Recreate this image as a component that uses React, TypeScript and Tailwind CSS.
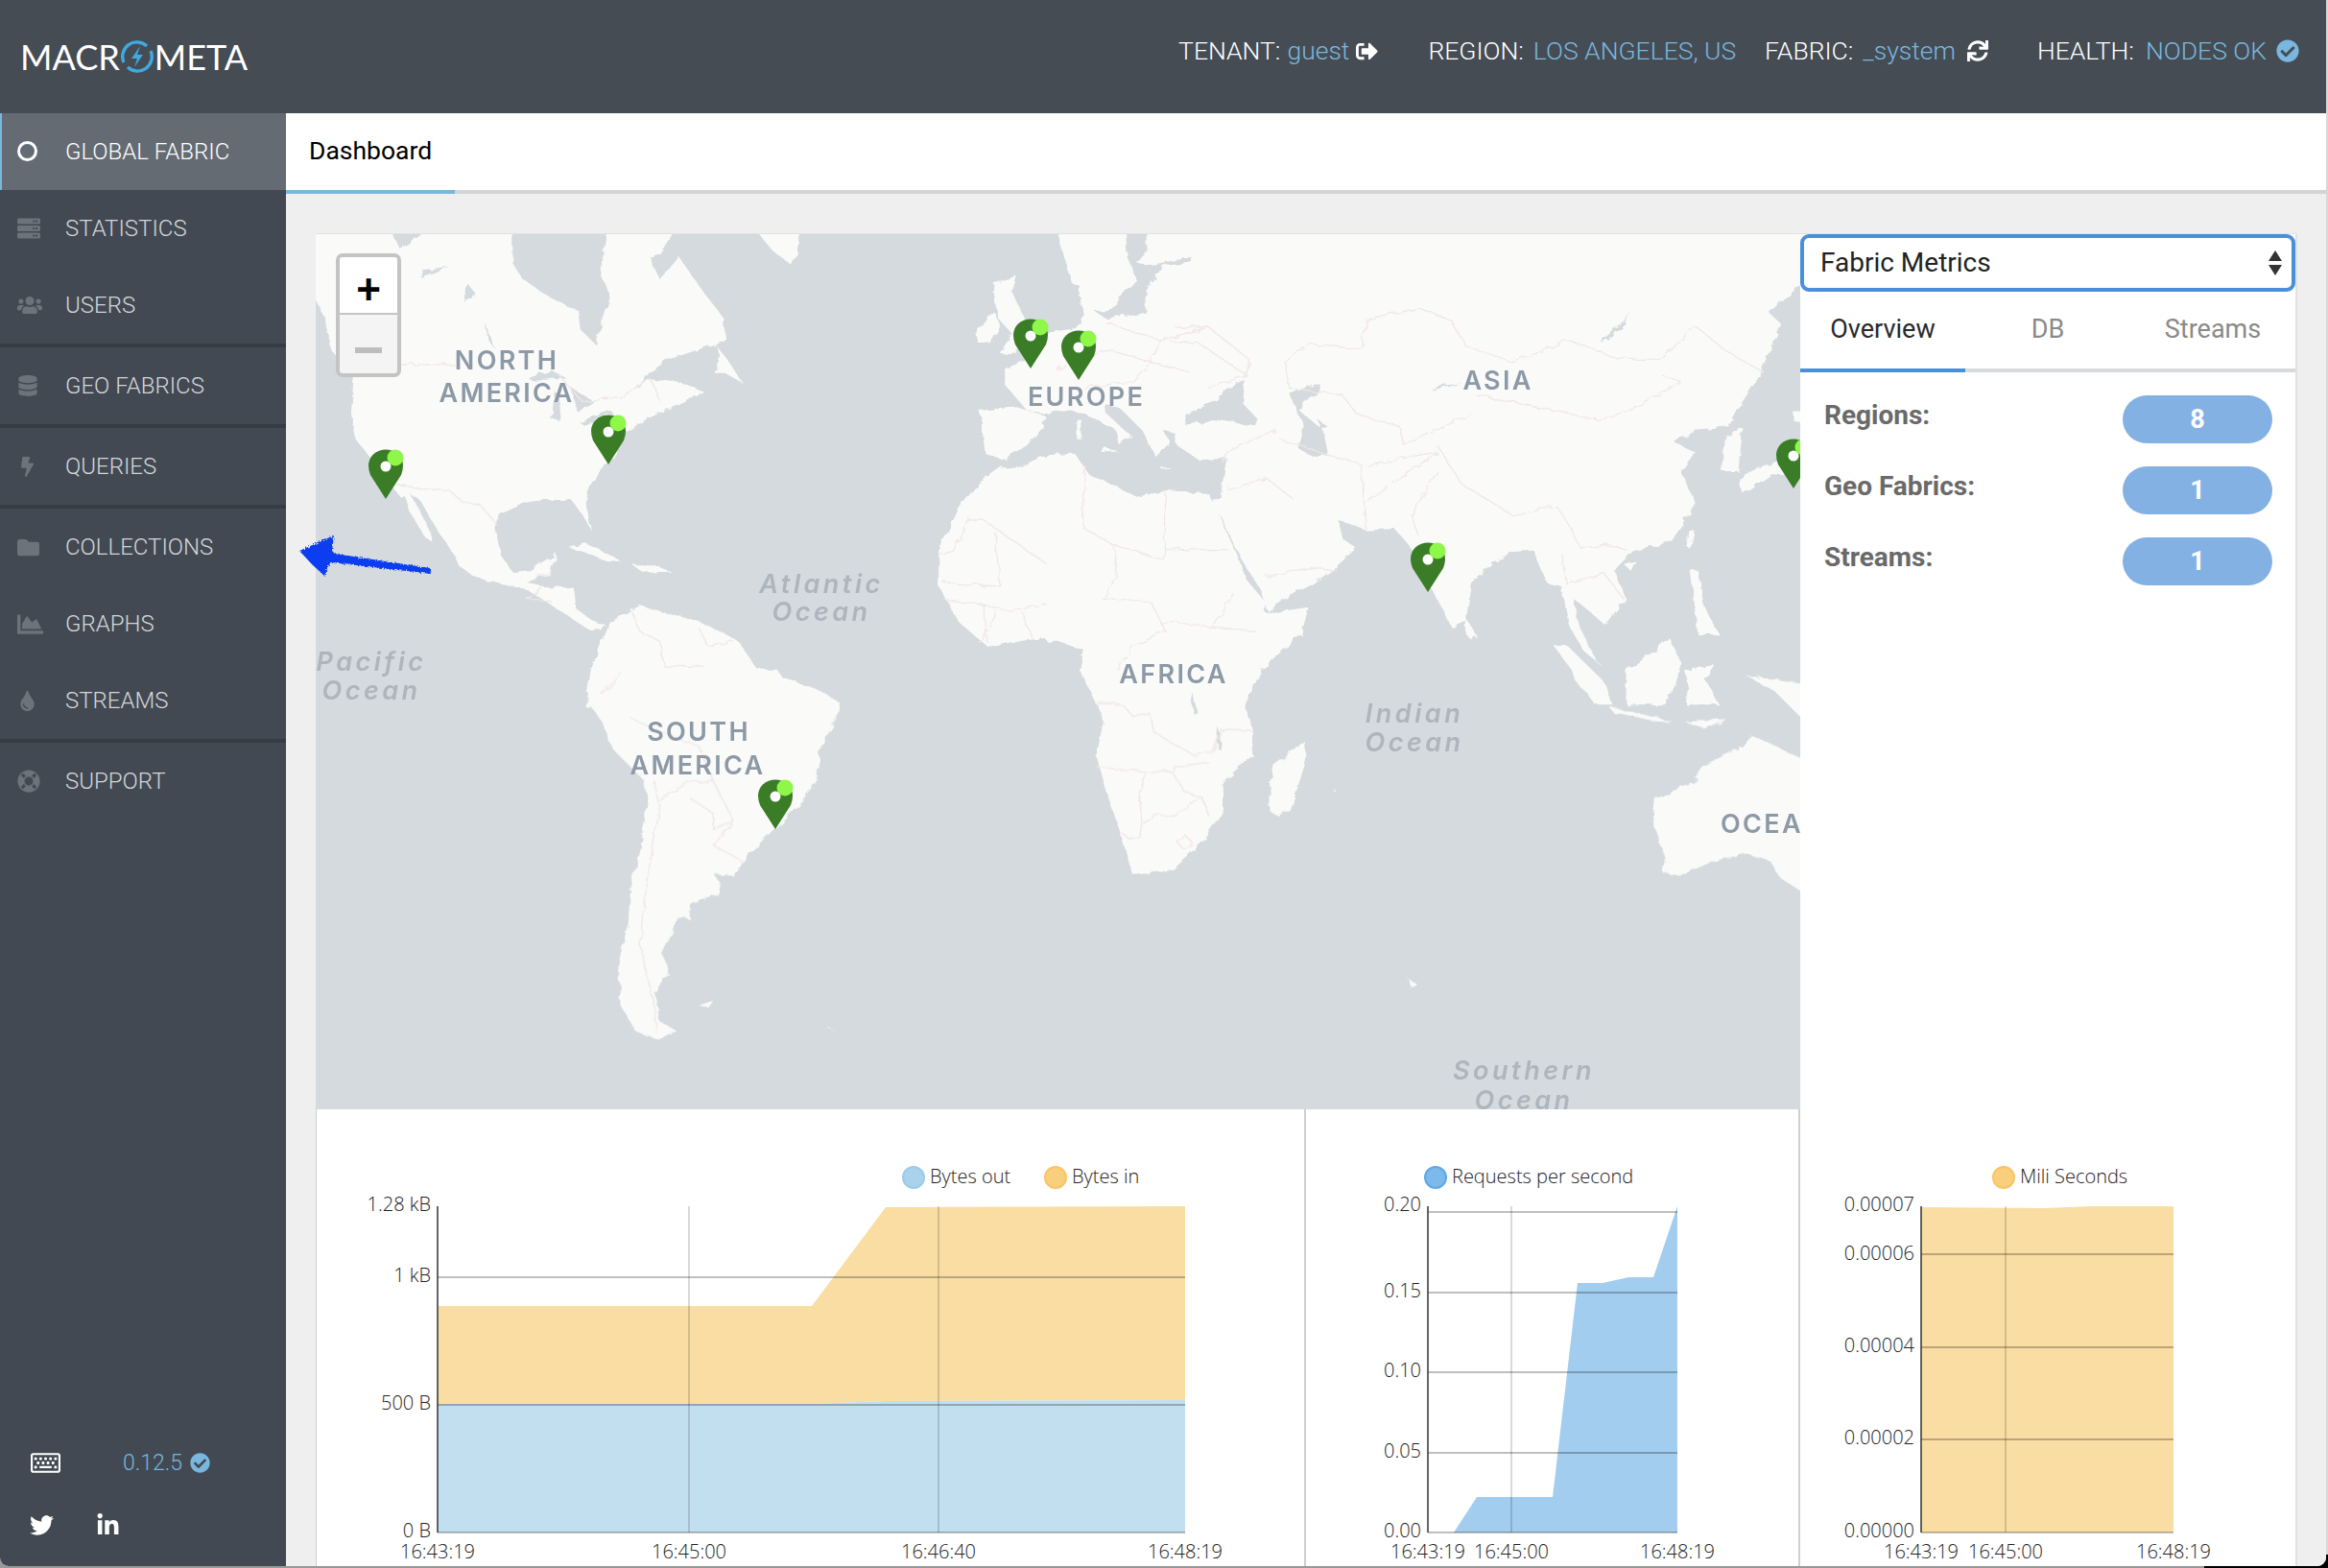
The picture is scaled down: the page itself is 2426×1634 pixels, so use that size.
import React from "react";
import {
  FaServer, FaUsers, FaDatabase, FaBolt, FaFolder, FaChartArea, FaTint, FaLifeRing,
  FaSignOutAlt, FaSync, FaCheckCircle, FaRegKeyboard, FaTwitter, FaLinkedinIn,
} from "react-icons/fa";

const NAV: { label: string; Icon?: React.ComponentType<{ className?: string }>; sep?: boolean; active?: boolean; cls?: string }[] = [
  { label: "GLOBAL FABRIC", active: true },
  { label: "STATISTICS", Icon: FaServer, cls: "text-[24px]" },
  { label: "USERS", Icon: FaUsers, cls: "text-[26px]", sep: true },
  { label: "GEO FABRICS", Icon: FaDatabase, cls: "text-[22px]", sep: true },
  { label: "QUERIES", Icon: FaBolt, cls: "text-[21px]", sep: true },
  { label: "COLLECTIONS", Icon: FaFolder, cls: "text-[23px]" },
  { label: "GRAPHS", Icon: FaChartArea, cls: "text-[27px]" },
  { label: "STREAMS", Icon: FaTint, cls: "text-[21px]", sep: true },
  { label: "SUPPORT", Icon: FaLifeRing, cls: "text-[24px]" },
];

function Logo() {
  return (
    <div className="ml-[21px] flex items-center text-[36px] text-white [font-family:Lato,sans-serif] font-normal leading-none">
      <span>MACR</span>
      <svg viewBox="0 0 34 34" className="mx-[1px] h-[34px] w-[34px]">
        <path d="M27 6 A15 15 0 0 0 3 23" fill="none" stroke="#3fa9e0" strokeWidth="3.4" />
        <path d="M7 28 A15 15 0 0 0 31 11" fill="none" stroke="#3fa9e0" strokeWidth="3.4" />
        <path d="M20 6 L11 19 H17 L14 28 L23 15 H17 Z" fill="#3fa9e0" />
      </svg>
      <span>META</span>
    </div>
  );
}

function Header() {
  const label = "text-white";
  const val = "text-[#79b7de]";
  return (
    <header className="flex h-[118px] shrink-0 items-center justify-between bg-[#454c54] text-[26.5px] font-light">
      <Logo />
      <div className="mb-[12px] mr-[28px] flex items-center">
        <span className={label}>TENANT:</span>
        <span className={`${val} ml-[7px]`}>guest</span>
        <FaSignOutAlt className="ml-[7px] text-[23px] text-white" />
        <span className={`${label} ml-[52px]`}>REGION:</span>
        <span className={`${val} ml-[10px]`}>LOS ANGELES, US</span>
        <span className={`${label} ml-[30px]`}>FABRIC:</span>
        <span className={`${val} ml-[10px]`}>_system</span>
        <FaSync className="ml-[12px] text-[22px] text-white" />
        <span className={`${label} ml-[51px]`}>HEALTH:</span>
        <span className={`${val} ml-[12px]`}>NODES OK</span>
        <FaCheckCircle className="ml-[10px] text-[24px] text-[#79b7de]" />
      </div>
    </header>
  );
}

function Sidebar() {
  return (
    <aside className="flex w-[298px] shrink-0 flex-col bg-[#424952]">
      {NAV.map((n) => (
        <div key={n.label} className={n.sep ? "border-b-4 border-[#363c43]" : ""}>
          <div
            className={
              n.active
                ? "flex h-[80px] items-center border-l-2 border-[#79b7de] bg-[#646b73] pb-[1px] text-[24px] font-light text-white"
                : "flex h-[80px] items-center border-l-2 border-transparent text-[24px] font-light text-[#d3d6d9]"
            }
          >
            <span className={`flex w-[66px] items-center pl-[16px] text-[#6c737b] ${n.cls ?? ""}`}>
              {n.Icon ? <n.Icon /> : <span className="block h-[21px] w-[21px] rounded-full border-[3.5px] border-white" />}
            </span>
            <span>{n.label}</span>
          </div>
        </div>
      ))}
      <div className="mt-auto flex flex-col pb-[30px]">
        <div className="flex items-center pl-[32px]">
          <FaRegKeyboard className="text-[31px] text-white" />
          <span className="ml-[65px] text-[23px] font-light text-[#79b7de]">0.12.5</span>
          <FaCheckCircle className="ml-[8px] text-[21px] text-[#79b7de]" />
        </div>
        <div className="mt-[35px] flex items-center pl-[31px] text-[25px] text-white">
          <FaTwitter />
          <FaLinkedinIn className="ml-[44px]" />
        </div>
      </div>
    </aside>
  );
}

const sea = "#d4dadd";
const land = "#fafaf9";
const border = "#f1e7e7";

function Poly({ p, fill }: { p: string; fill?: string }) {
  return <polygon points={p} fill={fill ?? land} />;
}
function Line({ p }: { p: string }) {
  return <polyline points={p} fill="none" stroke={border} strokeWidth="1.3" vectorEffect="non-scaling-stroke" />;
}

const PINS = [
  [402, 519], [634, 483], [1074, 383], [1124, 395], [1488, 616], [1869, 508], [808, 863],
];

const LABELS: [string, number, number, number][] = [
  ["NORTH", 528, 374, 0], ["AMERICA", 528, 408, 0], ["EUROPE", 1132, 412, 0], ["ASIA", 1561, 395, 0],
  ["AFRICA", 1223, 701, 0], ["SOUTH", 728, 761, 0], ["AMERICA", 727, 796, 0], ["OCEANIA", 1793, 857, 1],
];
const SEAS: [string, number, number][] = [
  ["Atlantic", 856, 607], ["Ocean", 856, 636], ["Pacific", 387, 688], ["Ocean", 387, 718],
  ["Indian", 1474, 742], ["Ocean", 1474, 772], ["Southern", 1588, 1114], ["Ocean", 1588, 1145],
];

function MapPanel() {
  return (
    <div className="relative flex-1 overflow-hidden">
      <svg viewBox="329 243 1547 912" className="block h-full w-full">
        <defs>
          <filter id="rough" x="300" y="200" width="1620" height="990" filterUnits="userSpaceOnUse">
            <feTurbulence type="fractalNoise" baseFrequency="0.09" numOctaves="3" seed="4" result="n" />
            <feDisplacementMap in="SourceGraphic" in2="n" scale="7" />
          </filter>
        </defs>
        <rect x="329" y="243" width="1547" height="912" fill={sea} />
        <g filter="url(#rough)">
          <g transform="translate(320 230) scale(0.5102 0.33333)">
            <Poly p="0,-30 175,-30 175,42 190,85 232,42 232,-30 420,-30 420,130 440,180 500,240 555,280 560,340 590,385 600,330 620,230 600,170 610,42 610,-30 745,-30 745,42 720,100 700,110 720,180 760,110 800,200 850,300 855,370 800,400 740,430 700,470 670,530 700,490 760,500 810,530 745,580 690,620 650,660 625,740 600,780 575,830 570,880 580,965 565,920 540,870 480,870 440,880 395,910 385,960 395,1040 420,1095 455,1090 510,1035 495,1100 450,1130 480,1140 545,1145 550,1210 585,1250 610,1260 580,1280 520,1220 450,1150 400,1135 340,1110 310,1075 300,1040 260,950 230,870 205,850 190,860 125,730 100,680 90,600 95,490 70,450 50,400 35,300 20,250 0,220" />
            <Poly p="195,845 210,850 250,960 258,1005 240,985 215,920" />
            <Poly p="450,490 500,465 530,490 470,500" fill={sea} />
            <Poly p="505,530 515,540 518,620 500,620" fill={sea} />
            <Poly p="540,520 585,560 555,600 545,560" fill={sea} />
            <Poly p="555,625 620,590 625,600 565,635" fill={sea} />
            <Poly p="240,150 290,140 230,175" fill={sea} />
            <Poly p="325,190 345,225 320,250" fill={sea} />
            <Poly p="360,310 385,400 370,370" fill={sea} />
            <Poly p="925,-30 1005,-30 1005,42 1000,110 985,130 950,90 925,42" />
            <Poly p="835,385 858,430 890,505 850,470 830,470 845,420" />
            <Poly p="535,1020 570,1005 640,1060 620,1065 580,1040 550,1025" />
            <Poly p="665,1075 710,1075 745,1095 720,1095 690,1100" />
            <Poly p="1365,350 1400,275 1415,320 1395,375 1370,380" />
            <Poly p="1400,190 1450,170 1440,220 1470,320 1490,370 1430,420 1415,410 1440,350 1410,300" />
            <Poly p="1375,590 1450,580 1510,610 1505,640 1470,700 1420,745 1385,725 1380,660" />
            <Poly p="1420,765 1450,770 1500,735 1568,730 1600,800 1600,1330 1520,1300 1460,1310 1395,1335 1330,1250 1290,1140 1290,1030 1330,900 1370,820" />
            <Poly p="620,1250 680,1200 720,1220 800,1250 880,1310 920,1400 1000,1440 1085,1500 1085,1520 570,1520 580,1400 600,1320" />
            <Line p="190,447 300,447" />
            <Line p="510,470 560,560 640,550 700,490 720,560" />
            <Line p="185,825 290,840 320,880 350,880 390,950" />
            <Line p="450,1130 500,1090" />
            <Line p="480,1140 450,1180 500,1190" />
            <Line p="660,1210 680,1280 720,1310 730,1390 810,1390" />
            <Line p="800,1270 820,1330 870,1310" />
            <Line p="1380,930 1350,930 1320,1030 1290,1040" />
            <Line p="1380,930 1500,1060 1525,1080 1568,1060" />
            <Line p="1405,970 1415,1140 1300,1130" />
            <Line p="1525,1080 1525,1230" />
            <Line p="1300,1180 1390,1200 1440,1220 1568,1170" />
            <Line p="1380,1200 1390,1320" />
            <Line p="1460,1220 1480,1300" />
            <Line p="1375,1320 1410,1220" />
          </g>
          <g transform="translate(1100 230) scale(0.4975 0.33333)">
            <Poly p="6,-30 1600,-30 1600,150 1560,190 1495,285 1520,320 1480,470 1440,560 1410,640 1340,650 1295,690 1340,720 1310,780 1340,880 1290,1000 1210,1030 1170,1090 1195,1180 1150,1260 1120,1220 1085,1180 1095,1260 1135,1380 1150,1395 1105,1340 1075,1260 1060,1140 1030,1130 1000,1025 950,1030 870,1130 860,1250 830,1270 810,1210 780,1130 745,1020 710,960 650,965 590,930 600,990 630,1020 580,1090 530,1140 460,1195 445,1220 430,1150 390,1060 345,920 320,880 345,860 358,740 300,745 255,700 250,660 225,650 240,690 210,735 180,650 140,590 105,570 100,590 150,660 160,670 135,700 125,650 60,600 0,590 -30,600 -60,590 -106,510 -106,460 -40,420 -40,380 0,340 40,330 60,290 50,245 50,200 32,190 6,42" />
            <Poly p="1400,680 1440,640 1430,780 1395,780" />
            <Poly p="145,-30 190,-30 190,95 170,130 200,135 285,110 280,125 225,135 190,215 190,280 110,305 80,280 110,280 120,260 170,180 150,110" fill={sea} />
            <Poly p="270,600 300,580 340,560 355,520 395,495 390,565 425,620 420,640 340,620 270,635" fill={sea} />
            <Poly p="490,540 550,500 555,520 510,590 560,650 570,720 540,735 510,710 520,640" fill={sea} />
            <Poly p="550,620 570,640 555,650" fill={sea} />
            <Poly p="1140,375 1195,310 1205,260 1195,320 1160,370" fill={sea} />
            <Poly p="790,530 850,505 800,515" fill={sea} />
            <Poly p="-20,730 40,725 70,790 130,830 170,860 235,840 320,850 330,880 380,1040 400,1120 440,1190 440,1225 530,1205 515,1290 430,1400 395,1510 85,1510 50,1400 60,1340 0,1310 -20,1310" />
            <Poly p="1430,800 1465,775 1540,740 1600,690 1600,800 1500,790 1440,850" />
            <Poly p="1545,590 1600,590 1600,640 1550,630" />
            <Poly p="1330,1090 1345,1090 1355,1190 1390,1290 1345,1290 1340,1220" />
            <Poly p="1325,965 1338,965 1330,1025 1322,1015" />
            <Poly p="1190,1070 1215,1060 1205,1092" />
            <Poly p="860,1240 885,1300 870,1306 860,1290" />
            <Poly p="1040,1320 1075,1330 1150,1440 1165,1510 1130,1510 1090,1420" />
            <Poly p="1195,1400 1240,1360 1285,1300 1310,1380 1300,1440 1280,1510 1195,1510" />
            <Poly p="1320,1510 1330,1400 1380,1385 1360,1430 1390,1510" />
            <Poly p="1470,1420 1600,1470 1600,1510 1500,1460" />
            <Poly p="45,620 55,620 55,680 45,680" />
            <Poly p="100,705 130,715 95,720" />
            <Poly p="220,765 245,770 220,772" />
            <Line p="250,330 320,330 405,430 400,480 320,520" />
            <Line p="480,440 530,380 640,400 650,310 760,270 830,310 860,390 960,440 1075,370 1180,430 1270,430 1340,325 1400,400 1480,470" />
            <Line p="880,540 1040,590 1140,620 1220,580 1310,500 1270,480" />
            <Line p="480,440 490,520 600,540 630,600 720,640 730,700 870,600" />
            <Line p="800,700 850,820 960,920 1050,890 1080,960 1100,1020 1170,1010 1200,1030" />
            <Line p="800,780 745,920 760,980" />
            <Line p="470,680 640,760 650,960" />
            <Line p="650,760 800,720 650,880" />
            <Line p="360,840 440,800 500,870" />
            <Line p="60,760 60,960 120,1010 230,1060 230,840" />
            <Line p="230,1025 360,1025" />
            <Line p="120,1010 130,1100 100,1180 200,1190" />
            <Line p="200,1190 230,1280 160,1330 130,1400" />
            <Line p="370,1160 330,1270 240,1250 220,1260" />
            <Line p="330,1270 420,1280" />
            <Line p="440,1110 540,1080 590,1090" />
            <Line p="1060,1040 1070,1130 1150,1100 1190,1180" />
            <Line p="110,320 220,370 200,440 280,470" />
            <Line p="0,460 110,400 200,440 160,500 60,520" />
            <Line p="220,370 320,330" />
            <Line p="400,480 300,380 220,370" />
            <Line p="460,650 360,720 350,760" />
          </g>
          <g transform="translate(320 700) scale(0.5102 0.33333)">
            <Poly p="580,-10 570,80 600,150 625,240 690,340 695,400 680,560 660,680 655,800 635,930 640,1040 670,1120 720,1150 755,1120 720,1090 710,1000 740,930 725,880 750,800 755,760 780,770 785,720 840,690 845,660 830,630 870,635 900,570 940,510 1000,420 1040,340 1050,220 1090,120 1085,90 1040,50 980,40 960,-10" />
            <Poly p="800,1040 830,1025 820,1047" />
            <Poly p="1058,1100 1078,1120 1065,1110" />
            <Line p="640,0 600,70" />
            <Line p="660,140 700,170 800,230 830,340 870,460 830,540 890,590" />
            <Line p="710,340 720,430 690,680 680,850 710,1050 712,1120" />
            <Line p="720,400 780,340 830,340" />
            <Line p="780,390 830,440 830,490 870,460" />
          </g>
          <g transform="translate(1100 700) scale(0.5 0.33333)">
            <Poly p="50,-10 80,70 100,150 85,260 110,390 135,500 160,630 240,615 300,540 350,430 350,370 345,345 410,260 410,180 395,100 430,-10" />
            <Poly p="515,210 525,260 490,430 465,450 445,430 445,380 455,290 490,250" />
            <Poly p="1600,300 1500,230 1450,195 1420,240 1350,290 1330,345 1250,390 1245,460 1270,580 1265,625 1300,635 1370,590 1440,565 1490,590 1510,640 1600,730" />
            <Poly p="1155,105 1250,140 1285,150 1250,152 1160,122" />
            <Poly p="1310,150 1400,145 1350,175" />
            <Poly p="1075,-10 1150,100 1130,90 1090,40" />
            <Poly p="1195,-10 1295,-10 1270,60 1210,50" />
            <Poly p="1310,-10 1360,-10 1340,40 1350,80 1320,60" />
            <Poly p="1440,10 1560,35 1560,150 1500,60" />
            <Poly p="735,955 755,975 738,980" />
            <Poly p="580,365 586,372 580,372" />
            <Poly p="283,60 298,130 290,135 280,80" fill={sea} />
            <Poly p="337,165 348,245 340,240 335,190" fill={sea} />
            <Line p="85,95 140,100 160,135 195,125 205,185 290,260 330,240 345,180 410,180" />
            <Line p="85,295 190,310 240,305 270,290 320,280" />
            <Line p="190,310 175,385 180,475 210,445 245,450 305,390 320,450" />
            <Line p="240,305 270,375 305,390" />
            <Line p="135,500 150,515 175,515 180,470" />
            <Line p="255,530 270,510 285,530 265,550 255,530" />
          </g>
        </g>
        {PINS.map(([x, y]) => (
          <g key={x}>
            <path
              d={`M${x} ${y} L${x - 16} ${y - 25} Q${x - 18} ${y - 30} ${x - 18} ${y - 35} A18 16.5 0 0 1 ${x + 18} ${y - 35} Q${x + 18} ${y - 30} ${x + 16} ${y - 25}Z`}
              fill="#3a7d26"
            />
            <circle cx={x} cy={y - 34} r="5.5" fill="#fff" />
            <circle cx={x + 10} cy={y - 43} r="8.5" fill="#8ef74a" />
          </g>
        ))}
        {LABELS.map(([t, x, y, start]) => (
          <text
            key={t + x}
            x={x}
            y={y}
            textAnchor={start ? "start" : "middle"}
            dominantBaseline="central"
            className="fill-[#8c99a6] text-[27px] font-semibold tracking-[2.3px] [font-family:Inter,sans-serif]"
          >
            {t}
          </text>
        ))}
        {SEAS.map(([t, x, y]) => (
          <text
            key={t + y}
            x={x}
            y={y}
            textAnchor="middle"
            dominantBaseline="central"
            className="fill-[#adb5bd] text-[27px] font-semibold italic tracking-[3.5px] [font-family:Inter,sans-serif]"
          >
            {t}
          </text>
        ))}
      </svg>
      <div className="absolute left-[21px] top-[20px] flex h-[129px] w-[68px] flex-col overflow-hidden rounded-[7px] border-4 border-[#c4c4c4] bg-[#f4f4f4]">
        <div className="flex h-[60px] items-center justify-center border-b-2 border-[#c4c4c4] bg-white">
          <span className="mt-[10px] block text-[44px] font-bold leading-none text-black [font-family:'Liberation_Sans',sans-serif]">+</span>
        </div>
        <div className="flex flex-1 items-center justify-center">
          <span className="mt-[12px] block h-[6px] w-[28px] bg-[#bdbdbd]" />
        </div>
      </div>
    </div>
  );
}

function MetricsPanel() {
  const rows: [string, string][] = [["Regions:", "8"], ["Geo Fabrics:", "1"], ["Streams:", "1"]];
  return (
    <div className="flex w-[516px] shrink-0 flex-col bg-white">
      <div className="flex h-[60px] items-center justify-between rounded-[9px] border-4 border-[#4a90d9] pl-[17px] pr-[10px] text-[28px] text-[#222]">
        <span>Fabric Metrics</span>
        <svg viewBox="0 0 14 26" className="h-[26px] w-[14px]">
          <path d="M7 0 L14 11 H0Z M0 15 H14 L7 26Z" fill="#333" />
        </svg>
      </div>
      <div className="flex h-[84px] border-b-4 border-[#d8dadc] pb-[2px] text-[27px]">
        <div className="relative flex w-[172px] items-center justify-center text-[#2a2a2a]">
          Overview
          <span className="absolute -bottom-[6px] left-0 h-[4px] w-full bg-[#4a90d9]" />
        </div>
        <div className="flex w-[172px] items-center justify-center text-[#8a8a8a]">DB</div>
        <div className="flex w-[172px] items-center justify-center text-[#8a8a8a]">Streams</div>
      </div>
      <div className="flex flex-col gap-[24px] pl-[25px] pr-[24px] pt-[24px]">
        {rows.map(([k, v]) => (
          <div key={k} className="flex h-[50px] justify-between">
            <span className="mt-[-4px] text-[28px] font-bold leading-[50px] text-[#6a6a6a]">{k}</span>
            <span className="flex h-[50px] w-[156px] items-center justify-center rounded-[25px] bg-[#83b1e3] text-[27px] font-bold text-white">
              {v}
            </span>
          </div>
        ))}
      </div>
    </div>
  );
}

type ChartProps = {
  box: string;
  cls: string;
  x0: number;
  x1: number;
  yLabels: [string, number][];
  xLabels: [string, number][];
  grid: number[];
  vgrid: number[];
  areas: [string, string][];
  legend: [number, string, string, string][];
};

function Chart({ box, cls, x0, x1, yLabels, xLabels, grid, vgrid, areas, legend }: ChartProps) {
  const top = 1256;
  const bottom = 1596;
  const txt = "fill-[#222] text-[20px] font-light [font-family:'Open_Sans',sans-serif]";
  return (
    <div className={cls}>
      <svg viewBox={box} className="block h-full w-full">
        {areas.map(([d, c]) => (
          <polygon key={c} points={d} fill={c} />
        ))}
        {grid.map((y) => (
          <line key={y} x1={x0} x2={x1} y1={y} y2={y} stroke="#000" strokeOpacity="0.25" strokeWidth="2" />
        ))}
        {vgrid.map((x) => (
          <line key={x} x1={x} x2={x} y1={top} y2={bottom} stroke="#000" strokeOpacity="0.3" strokeWidth="1" />
        ))}
        <line x1={x0} x2={x1} y1={bottom} y2={bottom} stroke="#000" strokeOpacity="0.25" strokeWidth="2" />
        <line x1={x0} x2={x0} y1={top} y2={bottom} stroke="#333" strokeWidth="1.5" />
        {yLabels.map(([t, y]) => (
          <text key={t} x={x0 - 7} y={y - 1.5} textAnchor="end" dominantBaseline="central" className={txt}>
            {t}
          </text>
        ))}
        {xLabels.map(([t, x]) => (
          <text key={t} x={x} y={1615.5} textAnchor="middle" dominantBaseline="central" className={txt}>
            {t}
          </text>
        ))}
        {legend.map(([cx, t, f, s]) => (
          <g key={t}>
            <circle cx={cx} cy={1226} r="11" fill={f} stroke={s} strokeWidth="2" />
            <text x={cx + 17} y={1224} dominantBaseline="central" className={txt}>
              {t}
            </text>
          </g>
        ))}
      </svg>
    </div>
  );
}

function Charts() {
  return (
    <div className="flex flex-1 border-l border-[#cfcfcf] bg-white">
      <Chart
        box="330 1155 1029 477"
        cls="w-[1031px] shrink-0 border-r-2 border-[#cfcfcf]"
        x0={456}
        x1={1235}
        yLabels={[["1.28 kB", 1255], ["1 kB", 1329], ["500 B", 1462], ["0 B", 1595]]}
        xLabels={[["16:43:19", 456], ["16:45:00", 718], ["16:46:40", 978], ["16:48:19", 1235]]}
        grid={[1330, 1463]}
        vgrid={[718, 978]}
        areas={[
          ["456,1360 846,1360 923,1257 1235,1256 1235,1458 923,1459 846,1462 456,1462", "#f9dda3"],
          ["456,1462 846,1462 923,1459 1235,1458 1235,1596 456,1596", "#c2dff0"],
        ]}
        legend={[
          [952, "Bytes out", "#a9d2ec", "#9ccbe9"],
          [1100, "Bytes in", "#f9cf7c", "#f8c467"],
        ]}
      />
      <Chart
        box="1361 1155 513 477"
        cls="w-[515px] shrink-0 border-r-2 border-[#cfcfcf]"
        x0={1488}
        x1={1748}
        yLabels={[["0.20", 1255], ["0.15", 1345], ["0.10", 1428], ["0.05", 1512], ["0.00", 1595]]}
        xLabels={[["16:43:19", 1488], ["16:45:00", 1575], ["16:48:19", 1748]]}
        grid={[1262, 1346, 1429, 1513]}
        vgrid={[1575]}
        areas={[["1515,1596 1539,1559 1618,1559 1644,1336 1670,1336 1697,1330 1723,1330 1748,1256 1748,1596", "#a3cdee"]]}
        legend={[[1496, "Requests per second", "#7db9ea", "#5da9e6"]]}
      />
      <Chart
        box="1876 1155 516 477"
        cls="flex-1"
        x0={2002}
        x1={2265}
        yLabels={[["0.00007", 1255], ["0.00006", 1306], ["0.00004", 1402], ["0.00002", 1498], ["0.00000", 1595]]}
        xLabels={[["16:43:19", 2002], ["16:45:00", 2090], ["16:48:19", 2265]]}
        grid={[1306, 1403, 1499]}
        vgrid={[2090]}
        areas={[["2002,1257 2130,1258 2180,1256 2265,1256 2265,1596 2002,1596", "#f9dda3"]]}
        legend={[[2088, "Mili Seconds", "#f9cf7c", "#f8c467"]]}
      />
    </div>
  );
}

export default function App() {
  return (
    <div className="relative h-[1634px] w-[2426px] overflow-hidden bg-[#d8d8d8] [font-family:Roboto,sans-serif]">
      <div className="absolute bottom-0 left-0 h-[14px] w-full bg-[linear-gradient(90deg,#999_2297px,#000_2297px)]" />
      <div className="relative flex h-[1632px] w-[2424px] flex-col overflow-hidden rounded-b-[9px] bg-[#efefef]">
        <Header />
        <div className="flex min-h-0 flex-1">
          <Sidebar />
          <main className="flex min-w-0 flex-1 flex-col bg-[#efefef]">
            <div className="flex h-[84px] shrink-0 border-b-4 border-[#d2d4d6] bg-white">
              <div className="relative flex w-[176px] items-center pb-[2px] pl-[24px] text-[26.5px] font-[450] text-black">
                Dashboard
                <span className="absolute -bottom-[4px] left-0 h-[4px] w-full bg-[#79b7de]" />
              </div>
            </div>
            <div className="ml-[31px] mr-[30px] mt-[41px] flex min-h-0 flex-1 flex-col border-r-2 border-t border-[#e2e2e2]">
              <div className="flex h-[912px] shrink-0">
                <MapPanel />
                <MetricsPanel />
              </div>
              <Charts />
            </div>
          </main>
        </div>
      </div>
      <svg viewBox="300 550 160 60" className="pointer-events-none absolute left-[300px] top-[550px] h-[60px] w-[160px]">
        <defs>
          <filter id="scribble" x="300" y="550" width="160" height="60" filterUnits="userSpaceOnUse">
            <feTurbulence type="fractalNoise" baseFrequency="0.6" numOctaves="2" seed="2" result="n" />
            <feDisplacementMap in="SourceGraphic" in2="n" scale="5" />
          </filter>
        </defs>
        <path
          d="M312 574 L330 566 L348 558 L346 574 L349 577 L448 592 L449 598 L345 586 L342 590 L338 600 L325 588Z"
          fill="#0a3cf0"
          filter="url(#scribble)"
        />
      </svg>
    </div>
  );
}
